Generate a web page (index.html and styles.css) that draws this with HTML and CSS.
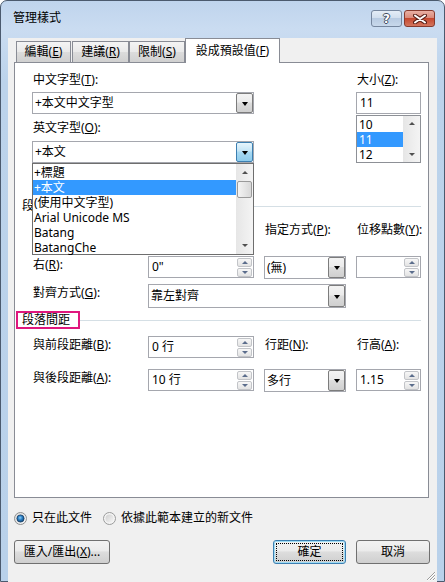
FILE: index.html
```html
<!DOCTYPE html>
<html lang="zh-Hant">
<head>
    <meta charset="UTF-8">
    <meta name="viewport" content="width=device-width, initial-scale=1.0">
    <title>管理樣式</title>
    <link rel="stylesheet" href="styles.css">
</head>
<body>
    <div class="window">
        <div class="titlebar">
            <span class="title">管理樣式</span>
            <div class="caption">
                <span class="cap-btn help">?</span>
                <span class="cap-btn close">
                    <svg width="14" height="10" viewBox="0 0 14 10">
                        <path d="M2 1.5 L12 8.5 M12 1.5 L2 8.5" stroke="#5b2017" stroke-width="4" stroke-linecap="round"/>
                        <path d="M2 1.5 L12 8.5 M12 1.5 L2 8.5" stroke="#ffffff" stroke-width="2" stroke-linecap="round"/>
                    </svg>
                </span>
            </div>
        </div>

        <div class="client">
            <div class="tabs">
                <div class="tab t1">編輯(<u>E</u>)</div>
                <div class="tab t2">建議(<u>R</u>)</div>
                <div class="tab t3">限制(<u>S</u>)</div>
                <div class="tab active">設成預設值(<u>F</u>)</div>
            </div>

            <div class="panel">
                <div class="fonts">
                    <div class="font-col">
                        <div class="lbl">中文字型(<u>T</u>):</div>
                        <div class="combo first"><span class="val">+本文中文字型</span><span class="drop"></span></div>
                        <div class="lbl second">英文字型(<u>O</u>):</div>
                        <div class="combo open">
                            <span class="val">+本文</span><span class="drop focus"></span>
                            <div class="droplist">
                                <div class="items">
                                    <div class="item">+標題</div>
                                    <div class="item sel">+本文</div>
                                    <div class="item">(使用中文字型)</div>
                                    <div class="item">Arial Unicode MS</div>
                                    <div class="item">Batang</div>
                                    <div class="item">BatangChe</div>
                                </div>
                                <div class="vscroll">
                                    <span class="arrow-btn"><span class="tri up"></span></span>
                                    <span class="track"><span class="thumb"></span></span>
                                    <span class="arrow-btn"><span class="tri down"></span></span>
                                </div>
                            </div>
                        </div>
                    </div>
                    <div class="size-col">
                        <div class="lbl">大小(<u>Z</u>):</div>
                        <div class="textbox">11</div>
                        <div class="sizelist">
                            <div class="items">
                                <div class="item">10</div>
                                <div class="item sel">11</div>
                                <div class="item">12</div>
                            </div>
                            <div class="vscroll">
                                <span class="arrow-btn"><span class="tri up"></span></span>
                                <span class="track"></span>
                                <span class="arrow-btn"><span class="tri down"></span></span>
                            </div>
                        </div>
                    </div>
                </div>

                <!-- the rest of this header and the left row sit under the open list -->
                <div class="group-head head1"><span class="gh-text">段</span><span class="gh-line"></span></div>

                <div class="row row-l">
                    <div class="lbl"></div>
                    <div class="spin w106"><span class="val"></span><span class="spin-btns"><span class="sb up"></span><span class="sb down"></span></span></div>
                    <div class="lbl">指定方式(<u>P</u>):</div>
                    <div class="lbl">位移點數(<u>Y</u>):</div>
                </div>

                <div class="row row-r">
                    <div class="lbl">右(<u>R</u>):</div>
                    <div class="spin w106"><span class="val">0"</span><span class="spin-btns"><span class="sb up"></span><span class="sb down"></span></span></div>
                    <div class="combo list w82"><span class="val">(無)</span><span class="drop"></span></div>
                    <div class="spin w65"><span class="val"></span><span class="spin-btns"><span class="sb up"></span><span class="sb down"></span></span></div>
                </div>

                <div class="row row-align">
                    <div class="lbl">對齊方式(<u>G</u>):</div>
                    <div class="combo list w198"><span class="val">靠左對齊</span><span class="drop"></span></div>
                </div>

                <div class="group-head head2"><span class="gh-text marked">段落間距</span><span class="gh-line"></span></div>

                <div class="row row-before">
                    <div class="lbl">與前段距離(<u>B</u>):</div>
                    <div class="spin w106"><span class="val">0 行</span><span class="spin-btns"><span class="sb up"></span><span class="sb down"></span></span></div>
                    <div class="lbl">行距(<u>N</u>):</div>
                    <div class="lbl">行高(<u>A</u>):</div>
                </div>

                <div class="row row-after">
                    <div class="lbl">與後段距離(<u>A</u>):</div>
                    <div class="spin w106"><span class="val">10 行</span><span class="spin-btns"><span class="sb up"></span><span class="sb down"></span></span></div>
                    <div class="combo list w82"><span class="val">多行</span><span class="drop"></span></div>
                    <div class="spin w65"><span class="val">1.15</span><span class="spin-btns"><span class="sb up"></span><span class="sb down"></span></span></div>
                </div>
            </div>

            <div class="radios">
                <svg class="radio" width="13" height="13" viewBox="0 0 13 13">
                    <defs>
                        <linearGradient id="ring" x1="0" y1="0" x2="1" y2="1">
                            <stop offset="0" stop-color="#d8d8d8"/>
                            <stop offset="1" stop-color="#fbfbfb"/>
                        </linearGradient>
                        <radialGradient id="dot" cx="0.45" cy="0.4" r="0.65">
                            <stop offset="0" stop-color="#8fd0f5"/>
                            <stop offset="0.45" stop-color="#2b7fc6"/>
                            <stop offset="1" stop-color="#0f3f6c"/>
                        </radialGradient>
                    </defs>
                    <circle cx="6.5" cy="6.5" r="6" fill="url(#ring)" stroke="#8e8f8f"/>
                    <circle cx="6.5" cy="6.5" r="3.6" fill="url(#dot)" stroke="#173f66" stroke-width="0.8"/>
                </svg>
                <span class="radio-text">只在此文件</span>
                <svg class="radio second" width="13" height="13" viewBox="0 0 13 13">
                    <defs>
                        <linearGradient id="hole" x1="0" y1="0" x2="1" y2="1">
                            <stop offset="0" stop-color="#cfcfcf"/>
                            <stop offset="1" stop-color="#f6f6f6"/>
                        </linearGradient>
                    </defs>
                    <circle cx="6.5" cy="6.5" r="6" fill="#f4f4f4" stroke="#9a9b9b"/>
                    <circle cx="6.5" cy="6.5" r="4" fill="url(#hole)"/>
                </svg>
                <span class="radio-text">依據此範本建立的新文件</span>
            </div>

            <div class="buttons">
                <span class="btn import">匯入/匯出(<u>X</u>)...</span>
                <span class="btn ok default">確定</span>
                <span class="btn cancel">取消</span>
            </div>

            <svg class="grip" width="10" height="10" viewBox="0 0 10 10">
                <path d="M9.5 1.5 L1.5 9.5 M9.5 4.5 L4.5 9.5 M9.5 7.5 L7.5 9.5" stroke="#ffffff" stroke-width="1"/>
                <path d="M9 1 L1 9 M9 4 L4 9 M9 7 L7 9" stroke="#9c9c9c" stroke-width="1"/>
            </svg>
        </div>
    </div>
</body>
</html>
```

FILE: styles.css
```css
* {
    box-sizing: border-box;
}
body {
    margin: 0;
    width: 445px;
    height: 582px;
    font-family: "Noto Sans", "Noto Sans CJK TC", sans-serif;
    font-size: 12px;
    color: #000;
    background: #fff;
}
u {
    text-decoration: underline;
    text-underline-offset: 1px;
}

/* window frame */
.window {
    width: 445px;
    height: 582px;
    border: 1px solid #4b5a6e;
    border-radius: 7px 7px 0 0;
    background: linear-gradient(#bfd4ed, #cadcf1 28px, #bcd3eb 80px, #b9d1ea);
    padding: 0 7px 8px;
}
.titlebar {
    height: 28px;
    display: flex;
    justify-content: space-between;
    align-items: flex-start;
    padding: 0 2px 0 5px;
}
.title {
    margin-top: 9px;
    line-height: 16px;
}
.caption {
    display: flex;
    gap: 2px;
    margin-top: 9px;
}
.cap-btn {
    width: 31px;
    height: 17px;
    border-radius: 3px;
    display: flex;
    align-items: center;
    justify-content: center;
}
.help {
    border: 1px solid #75869e;
    background: linear-gradient(#e4edf7, #d2dfee 45%, #b8cbe2 50%, #c8d8eb);
    color: #fff;
    font-family: "DejaVu Sans", sans-serif;
    font-weight: bold;
    font-size: 12px;
    text-shadow: 1px 0 #3d4c60, -1px 0 #3d4c60, 0 1px #3d4c60, 0 -1px #3d4c60;
}
.close {
    border: 1px solid #873a2d;
    background: linear-gradient(#eab0a3, #d98a7b 45%, #c6482f 50%, #d3765e);
}

/* client area */
.client {
    height: 544px;
    background: #f0f0f0;
    padding: 0 7px 0 6px;
    position: relative;
}
.tabs {
    display: flex;
    align-items: flex-end;
    height: 24px;
    margin-top: 9px;
    padding-left: 2px;
}
.tab {
    height: 21px;
    border: 1px solid #898c95;
    border-bottom: none;
    background: linear-gradient(#f4f4f4, #e9e9e9 50%, #dcdcdc 51%, #d0d0d0);
    text-align: center;
    line-height: 20px;
    white-space: nowrap;
}
.t1 {
    width: 55px;
    margin-right: 1px;
}
.t2 {
    width: 57px;
}
.t3 {
    width: 56px;
}
.tab.active {
    width: 95px;
    height: 25px;
    margin-bottom: -1px;
    background: #fff;
    line-height: 22px;
    padding-top: 1px;
    position: relative;
    z-index: 1;
}

.panel {
    width: 415px;
    height: 436px;
    border: 1px solid #898c95;
    background: #fff;
    padding: 9px 7px 0 17px;
}
.lbl {
    line-height: 16px;
    height: 16px;
    white-space: nowrap;
    padding-left: 1px;
}

/* font pickers */
.fonts {
    display: flex;
    justify-content: space-between;
}
.font-col {
    width: 222px;
}
.combo {
    height: 22px;
    border: 1px solid #a5a7ae;
    background: #fff;
    display: flex;
    align-items: center;
    position: relative;
}
.combo .val {
    flex: 1;
    padding-left: 2px;
    line-height: 16px;
    white-space: nowrap;
}
.font-col .first {
    margin-top: 4px;
}
.font-col .second {
    margin-top: 6px;
}
.font-col .open {
    margin-top: 5px;
}
.drop {
    width: 17px;
    height: 20px;
    border: 1px solid #7c7c7c;
    border-radius: 2px;
    background: linear-gradient(#f3f3f3, #ebebeb 45%, #dddddd 50%, #cfcfcf);
    display: flex;
    align-items: center;
    justify-content: center;
}
.drop::after {
    content: "";
    border-left: 3.5px solid transparent;
    border-right: 3.5px solid transparent;
    border-top: 4px solid #000;
    margin-top: 1px;
}
.drop.focus {
    border-color: #3c7fb1;
    background: linear-gradient(#e6f5fc, #c4e5f6 45%, #a9daf3 50%, #8dcbec);
}
.combo.list {
    height: 23px;
}
.combo.list .drop {
    height: 21px;
}
.w82 {
    width: 82px;
}
.w198 {
    width: 198px;
    grid-column: span 2;
}

.droplist {
    position: absolute;
    left: -1px;
    top: 21px;
    width: 222px;
    height: 92px;
    border: 1px solid #6e6e6e;
    background: #fff;
    display: flex;
    z-index: 5;
}
.items {
    flex: 1;
    padding-top: 1px;
}
.item {
    height: 15px;
    line-height: 15px;
    padding-left: 1px;
    white-space: nowrap;
}
.item.sel {
    background: #3399ff;
    color: #fff;
}
.vscroll {
    width: 17px;
    display: flex;
    flex-direction: column;
    background: linear-gradient(90deg, #e6e6e6, #f4f4f4);
}
.arrow-btn {
    height: 17px;
    display: flex;
    align-items: center;
    justify-content: center;
}
.track {
    flex: 1;
    padding: 0 1px;
}
.thumb {
    display: block;
    height: 17px;
    border: 1px solid #9a9a9a;
    border-radius: 2px;
    background: linear-gradient(90deg, #f4f4f4, #e6e6e6 50%, #d8d8d8);
}
.tri {
    width: 0;
    height: 0;
    border-left: 3px solid transparent;
    border-right: 3px solid transparent;
}
.tri.up {
    border-bottom: 3px solid #505050;
}
.tri.down {
    border-top: 3px solid #505050;
}

.size-col {
    width: 65px;
}
.textbox {
    margin-top: 4px;
    height: 22px;
    border: 1px solid #a5a7ae;
    padding-left: 3px;
    line-height: 20px;
}
.sizelist {
    margin-top: 1px;
    height: 48px;
    border: 1px solid #8d9096;
    display: flex;
}
.sizelist .item {
    padding-left: 2px;
}
.sizelist .arrow-btn {
    height: 15px;
}

/* group headers */
.group-head {
    display: flex;
    align-items: center;
    white-space: nowrap;
}
.head1 {
    margin: 35px 0 0 -10px;
    height: 16px;
    line-height: 16px;
}
.head1 .gh-line {
    margin-left: 4px;
}
.gh-line {
    flex: 1;
    height: 1px;
    background: #d5dfe5;
}
.head2 {
    margin: 3px 0 0 -16px;
    height: 18px;
}
.marked {
    border: 2px solid #e0177e;
    padding: 0 8px 0 4px;
    line-height: 14px;
}

/* field rows */
.row {
    display: grid;
    grid-template-columns: 116px 116px 92px 65px;
    align-items: start;
}
.row .lbl {
    margin-top: 1px;
}
.row-l {
    margin-top: 7px;
}
.row-r {
    margin-top: 13px;
}
.row-align {
    margin-top: 5px;
}
.row-align .combo.list {
    height: 24px;
}
.row-align .combo.list .drop {
    height: 22px;
}
.row-before {
    margin-top: 7px;
}
.row-after {
    margin-top: 11px;
}
.spin {
    height: 22px;
    border: 1px solid #a5a7ae;
    background: #fff;
    display: flex;
    align-items: center;
}
.spin .val {
    flex: 1;
    padding-left: 3px;
    line-height: 16px;
    white-space: nowrap;
}
.w106 {
    width: 106px;
}
.w65 {
    width: 65px;
}
.spin-btns {
    display: flex;
    flex-direction: column;
    gap: 1px;
    width: 15px;
    margin-right: 1px;
}
.sb {
    height: 9px;
    border: 1px solid #c2c4c8;
    border-radius: 2px;
    background: linear-gradient(#f7f7f7, #e3e3e3);
    display: flex;
    align-items: center;
    justify-content: center;
}
.sb::after {
    content: "";
    border-left: 3px solid transparent;
    border-right: 3px solid transparent;
}
.sb.up::after {
    border-bottom: 3px solid #5b6d8c;
}
.sb.down::after {
    border-top: 3px solid #5b6d8c;
}

/* bottom controls */
.radios {
    display: flex;
    align-items: center;
    height: 16px;
    margin-top: 12px;
}
.radio-text {
    margin-left: 5px;
    line-height: 16px;
}
.radio.second {
    margin-left: 11px;
}
.buttons {
    display: flex;
    margin-top: 14px;
}
.btn {
    height: 24px;
    border: 1px solid #707070;
    border-radius: 3px;
    background: linear-gradient(#f2f2f2, #ebebeb 45%, #dddddd 50%, #cfcfcf);
    text-align: center;
    line-height: 22px;
    white-space: nowrap;
}
.import {
    width: 96px;
}
.ok {
    width: 73px;
    margin-left: auto;
}
.cancel {
    width: 74px;
    margin-left: 10px;
}
.btn.default {
    border-color: #3c7fb1;
    box-shadow: inset 0 0 0 1px #9fdcf5;
    outline: 1px dotted #000;
    outline-offset: -4px;
}
.grip {
    position: absolute;
    right: 1px;
    bottom: 1px;
}
```
